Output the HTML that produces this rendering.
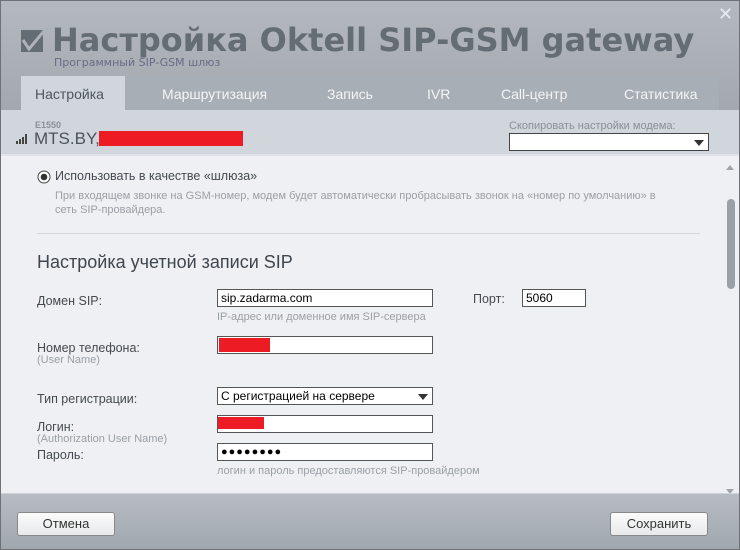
<!DOCTYPE html>
<html><head><meta charset="utf-8"><style>
*{margin:0;padding:0;box-sizing:border-box}
body{width:740px;height:550px;overflow:hidden;font-family:"Liberation Sans","DejaVu Sans",sans-serif;position:relative;background:#eef0f3}
.win{position:absolute;left:0;top:0;width:740px;height:550px;border:1px solid #6e7276}
.hdr{position:absolute;left:1px;top:1px;width:738px;height:109px;background:linear-gradient(#b4b9bf,#a2a8ae)}
.title{position:absolute;left:52px;top:21px;font-size:32px;font-weight:bold;color:#646c74;font-family:"DejaVu Sans","Liberation Sans",sans-serif;letter-spacing:0px;white-space:nowrap}
.sub{position:absolute;left:54px;top:56px;font-size:11px;color:#6a6a88;font-family:"DejaVu Sans",sans-serif}
.x{position:absolute;left:718px;top:4px;color:#e8ebee;font-size:18px}
.tabs{position:absolute;left:21px;top:76px;width:698px;height:34px;background:#a7aeb5}
.tab{position:absolute;top:10px;font-size:14px;color:#f4f5f6}
.tab.act{top:0;height:34px;padding-top:10px;background:#d0d6dc;color:#4e555c}
.band{position:absolute;left:1px;top:110px;width:738px;height:46px;background:#d0d6dc;border-bottom:2px solid #e0e4e8}
.lbl{position:absolute;font-size:12.5px;color:#444a50}
.hint{position:absolute;font-size:11px;color:#9aa0a6}
.in{position:absolute;background:#fff;border:1px solid #555;height:18px;font-size:12px;padding-left:3px;line-height:16px;color:#000}
.red{position:absolute;background:#ed1c24}
.foot{position:absolute;left:1px;top:493px;width:738px;height:56px;background:linear-gradient(#b7bcc2,#a0a7ae);border-top:1px solid #cfd3d7}
.btn{position:absolute;top:512px;height:24px;width:98px;border:1px solid #888;border-radius:3px;background:linear-gradient(#fbfbfb,#e8e9eb);font-size:13px;text-align:center;line-height:22px;color:#333}
.arr{position:absolute;width:0;height:0;border-left:5px solid transparent;border-right:5px solid transparent;border-top:6px solid #333}
</style></head><body>
<div class="win"></div>
<div class="hdr"></div>
<svg style="position:absolute;left:20px;top:29px" width="24" height="24"><rect x="1" y="1" width="22" height="22" fill="#646c74"/><path d="M3 11 L9 20 L24 2" stroke="#aeb3b9" stroke-width="3" fill="none"/></svg>
<div class="title">Настройка Oktell SIP-GSM gateway</div>
<div class="sub">Программный SIP-GSM шлюз</div>
<div class="x">✕</div>
<div class="tabs">
<div class="tab act" style="left:0;width:104px;padding-left:14px">Настройка</div>
<div class="tab" style="left:141px">Маршрутизация</div>
<div class="tab" style="left:306px">Запись</div>
<div class="tab" style="left:406px">IVR</div>
<div class="tab" style="left:480px">Call-центр</div>
<div class="tab" style="left:603px">Статистика</div>
</div>
<div class="band"></div>
<div style="position:absolute;left:35px;top:120px;font-size:9px;color:#8a9096;font-weight:bold">E1550</div>
<svg style="position:absolute;left:16px;top:134px" width="12" height="10"><rect x="0" y="7" width="2" height="3" fill="#444"/><rect x="3" y="5" width="2" height="5" fill="#444"/><rect x="6" y="3" width="2" height="7" fill="#444"/><rect x="9" y="0" width="2" height="10" fill="#444"/></svg>
<div style="position:absolute;left:34px;top:129px;font-size:17px;color:#4c535a">MTS.BY,</div>
<div class="red" style="left:99px;top:131px;width:144px;height:15px"></div>
<div style="position:absolute;left:509px;top:120px;font-size:11px;color:#8a9096">Скопировать настройки модема:</div>
<div class="in" style="left:509px;top:133px;width:200px;border-color:#444"></div>
<div class="arr" style="left:694px;top:140px"></div>
<div style="position:absolute;left:727px;top:199px;width:8px;height:90px;background:#9aa0a6;border-radius:4px"></div>
<div class="arr" style="left:726px;top:165px;border-top:none;border-bottom:5px solid #a0a5aa;border-left-width:4px;border-right-width:4px"></div>
<div class="arr" style="left:726px;top:489px;border-top:5px solid #a0a5aa;border-left-width:4px;border-right-width:4px"></div>
<svg style="position:absolute;left:37px;top:170px" width="14" height="14"><circle cx="7" cy="7" r="6" fill="#fff" stroke="#444"/><circle cx="7" cy="7" r="3.3" fill="#333"/></svg>
<div class="lbl" style="left:55px;top:169px;font-size:12.5px">Использовать в качестве «шлюза»</div>
<div class="hint" style="left:55px;top:189px;line-height:14px;width:620px">При входящем звонке на GSM-номер, модем будет автоматически пробрасывать звонок на «номер по умолчанию» в сеть SIP-провайдера.</div>
<div style="position:absolute;left:37px;top:233px;width:663px;height:1px;background:#d4d7da"></div>
<div class="lbl" style="left:37px;top:252px;font-size:18px;color:#3f464d">Настройка учетной записи SIP</div>
<div class="lbl" style="left:37px;top:294px">Домен SIP:</div>
<div class="in" style="left:217px;top:289px;width:216px">sip.zadarma.com</div>
<div class="lbl" style="left:473px;top:292px">Порт:</div>
<div class="in" style="left:522px;top:289px;width:64px">5060</div>
<div class="hint" style="left:217px;top:311px">IP-адрес или доменное имя SIP-сервера</div>
<div class="lbl" style="left:37px;top:341px">Номер телефона:</div>
<div class="hint" style="left:37px;top:354px">(User Name)</div>
<div class="in" style="left:217px;top:336px;width:216px"></div>
<div class="red" style="left:219px;top:338px;width:51px;height:14px"></div>
<div class="lbl" style="left:37px;top:392px">Тип регистрации:</div>
<div class="in" style="left:217px;top:387px;width:216px">С регистрацией на сервере</div>
<div class="arr" style="left:418px;top:394px"></div>
<div class="lbl" style="left:37px;top:420px">Логин:</div>
<div class="hint" style="left:37px;top:433px">(Authorization User Name)</div>
<div class="in" style="left:217px;top:415px;width:216px"></div>
<div class="red" style="left:218px;top:417px;width:46px;height:12px"></div>
<div class="lbl" style="left:37px;top:448px">Пароль:</div>
<div class="in" style="left:217px;top:443px;width:216px;font-size:11px;letter-spacing:1px">●●●●●●●●</div>
<div class="hint" style="left:217px;top:465px">логин и пароль предоставляются SIP-провайдером</div>
<div class="foot"></div>
<div class="btn" style="left:17px">Отмена</div>
<div class="btn" style="left:610px">Сохранить</div>
</body></html>
